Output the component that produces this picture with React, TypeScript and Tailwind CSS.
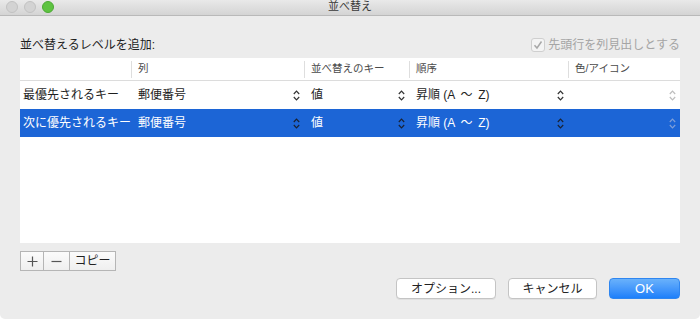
import React from "react";

const Chevron = ({ className }: { className: string }) => (
  <svg width="7" height="11" viewBox="0 0 7 11" className={className}>
    <polyline points="0.8,4 3.5,1.2 6.2,4" fill="none" stroke="currentColor" strokeWidth="1.2" />
    <polyline points="0.8,7 3.5,9.8 6.2,7" fill="none" stroke="currentColor" strokeWidth="1.2" />
  </svg>
);

const columns = [
  { label: "", width: "w-[111px]" },
  { label: "列", width: "w-[173px]" },
  { label: "並べ替えのキー", width: "w-[105px]" },
  { label: "順序", width: "w-[159px]" },
  { label: "色/アイコン", width: "flex-1" },
];

const rows = [
  { key: "最優先されるキー", col: "郵便番号", sortOn: "値", order: "昇順 (A \u2009〜\u2009 Z)", selected: false },
  { key: "次に優先されるキー", col: "郵便番号", sortOn: "値", order: "昇順 (A \u2009〜\u2009 Z)", selected: true },
];

const Cell = ({ width, text, selected, faint }: { width: string; text: string; selected: boolean; faint?: boolean }) => (
  <div className={`${width} flex items-center justify-between pl-[7px] pr-[4px]`}>
    <span className="whitespace-nowrap">{text}</span>
    <Chevron
      className={
        faint
          ? selected
            ? "text-[#7f9fd8]"
            : "text-[#bdbdbd]"
          : selected
          ? "text-[#1a2233]"
          : "text-[#333]"
      }
    />
  </div>
);

const App: React.FC = () => {
  return (
    <div className="w-[700px] h-[319px] bg-white font-['Liberation_Sans','Noto_Sans_CJK_JP',sans-serif] text-[12px] text-[#1e1e1e]">
      <div className="w-full h-full bg-[#ececec] rounded-b-[5px] flex flex-col">
        {/* title bar */}
        <div className="relative h-[16px] shrink-0 bg-gradient-to-b from-[#e9e9e9] to-[#d4d4d4] border-b border-[#b9b9b9] flex items-center">
          <div className="flex items-center gap-[6px] pl-[6px] -mt-[2px]">
            <span className="w-[12px] h-[12px] rounded-full bg-[#d3d3d3] border border-[#c2c2c2]" />
            <span className="w-[12px] h-[12px] rounded-full bg-[#d3d3d3] border border-[#c2c2c2]" />
            <span className="w-[12px] h-[12px] rounded-full bg-[#5ec341] border border-[#4ca935]" />
          </div>
          <div className="absolute inset-0 flex items-center justify-center text-[11px] leading-none text-[#3a3a3a] -mt-[2px]">
            並べ替え
          </div>
        </div>

        <div className="flex flex-col px-[20px] pt-[21px]">
          <div className="h-[16px] flex items-center justify-between">
            <span className="leading-none">並べ替えるレベルを追加:</span>
            <div className="flex items-center gap-[3px] text-[#a5a5a5]">
              <span className="w-[14px] h-[14px] rounded-[3px] border border-[#cfcfcf] bg-[#f4f4f4] flex items-center justify-center">
                <svg width="10" height="10" viewBox="0 0 10 10">
                  <polyline points="1.5,5.2 4,8 8.5,1.5" fill="none" stroke="#a8a8a8" strokeWidth="1.5" />
                </svg>
              </span>
              <span className="leading-none">先頭行を列見出しとする</span>
            </div>
          </div>

          {/* table */}
          <div className="mt-[5px] h-[185px] bg-white flex flex-col">
            <div className="h-[23px] flex border-b border-[#dcdcdc] text-[10.5px] text-[#4a4a4a]">
              {columns.map((c, i) => (
                <div key={i} className={`${c.width} flex items-center`}>
                  {i > 0 && <span className="w-px h-[17px] bg-[#dedede] mr-[6px]" />}
                  <span className="whitespace-nowrap">{c.label}</span>
                </div>
              ))}
            </div>
            {rows.map((r, i) => (
              <div
                key={i}
                className={`h-[28px] flex items-center ${r.selected ? "bg-[#1c65d6] text-white" : ""}`}
              >
                <div className="w-[111px] pl-[3px] whitespace-nowrap">{r.key}</div>
                <Cell width="w-[173px]" text={r.col} selected={r.selected} />
                <Cell width="w-[105px]" text={r.sortOn} selected={r.selected} />
                <Cell width="w-[159px]" text={r.order} selected={r.selected} />
                <Cell width="flex-1" text="" selected={r.selected} faint />
              </div>
            ))}
          </div>

          {/* segmented control */}
          <div className="mt-[8px] h-[20px] w-[96px] flex border border-[#b5b5b5] bg-gradient-to-b from-[#fbfbfb] to-[#efefef] text-[#555]">
            <div className="w-[23px] flex items-center justify-center border-r border-[#b5b5b5]">
              <svg width="11" height="11" viewBox="0 0 11 11">
                <path d="M5.5 0.5V10.5M0.5 5.5H10.5" stroke="currentColor" strokeWidth="1.2" />
              </svg>
            </div>
            <div className="w-[26px] flex items-center justify-center border-r border-[#b5b5b5]">
              <svg width="11" height="11" viewBox="0 0 11 11">
                <path d="M0.5 5.5H10.5" stroke="currentColor" strokeWidth="1.2" />
              </svg>
            </div>
            <div className="flex-1 flex items-center justify-center leading-none text-[#222]">コピー</div>
          </div>

          {/* dialog buttons */}
          <div className="mt-[7px] flex justify-end gap-[12px]">
            <button className="w-[100px] h-[21px] rounded-[4px] bg-white border border-[#c4c4c4] shadow-[0_1px_0_rgba(0,0,0,0.05)] leading-none text-[#222]">
              オプション...
            </button>
            <button className="w-[89px] h-[21px] rounded-[4px] bg-white border border-[#c4c4c4] shadow-[0_1px_0_rgba(0,0,0,0.05)] leading-none text-[#222]">
              キャンセル
            </button>
            <button className="w-[71px] h-[21px] rounded-[4px] bg-gradient-to-b from-[#69b1fb] to-[#1b7ffa] border border-[#2f86f0] leading-none text-white text-[13px]">
              OK
            </button>
          </div>
        </div>
      </div>
    </div>
  );
};

export default App;
